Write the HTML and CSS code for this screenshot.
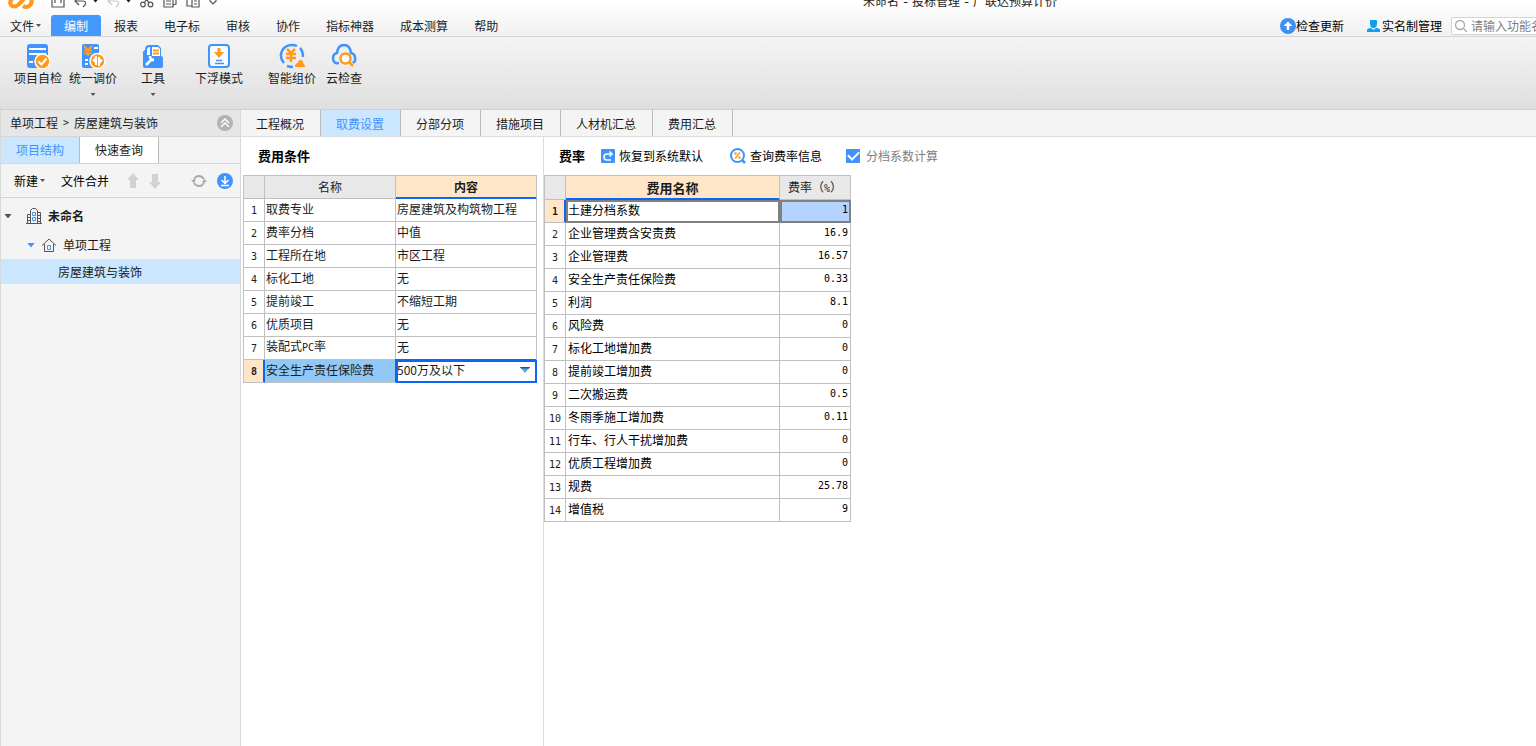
FILE: index.html
```html
<!DOCTYPE html>
<html lang="zh-CN">
<head>
<meta charset="utf-8">
<title>未命名 - 投标管理 - 广联达预算计价</title>
<link rel="stylesheet" href="styles.css">
</head>
<body>
<div class="app">
  <header class="top">
    <div class="titlebar">
      <svg class="logo" width="26" height="18" viewBox="0 0 26 18" fill="none" stroke="#ff9a1c" stroke-width="4"><path d="M10 2 4 7Q1 10 3 13q3 3 7 0l5-5q3-4 6-5M15 14q3 2 6 0 4-3 2-7"/></svg>
      <div class="quick">
        <button aria-label="保存"><svg width="14" height="14" viewBox="0 0 14 14"><path d="M1 1h12v12H1zM4 1v8M10 1v8"/></svg></button>
        <button aria-label="撤销"><svg width="14" height="14" viewBox="0 0 14 14"><path d="M5 3 1 7l4 4M1 7h7q5 0 3 4l-2 2"/></svg></button>
        <i class="caret dark"></i>
        <button aria-label="恢复" class="faint"><svg width="14" height="14" viewBox="0 0 14 14"><path d="M5 3 1 7l4 4M1 7h7q5 0 3 4l-2 2"/></svg></button>
        <i class="caret dark"></i>
        <button aria-label="剪切"><svg width="14" height="14" viewBox="0 0 14 14"><circle cx="3" cy="10.500" r="2.300"/><circle cx="10.500" cy="10.500" r="2.300"/><path d="M4 9l6-8M9 9 4 1"/></svg></button>
        <button aria-label="复制"><svg width="14" height="14" viewBox="0 0 14 14"><path d="M1 3h9v10H1zM4 3V1h9v9l-3 1M3 7h5M3 10h5"/></svg></button>
        <button aria-label="粘贴"><svg width="14" height="14" viewBox="0 0 14 14"><path d="M6 12H1V1h10v3M6 4h7v9H6zM8 7h3M8 10h3"/></svg></button>
        <button aria-label="更多" class="more"><svg width="8" height="8" viewBox="0 0 8 8"><path d="M1 2h6v2L4 7 1 4z"/></svg></button>
      </div>
      <h1 class="title">未命名<span> - </span>投标管理<span> - </span>广联达预算计价</h1>
    </div>
    <nav class="menu">
      <button class="file">文件<i class="caret"></i></button>
      <button class="active">编制</button>
      <button>报表</button>
      <button>电子标</button>
      <button>审核</button>
      <button>协作</button>
      <button>指标神器</button>
      <button>成本测算</button>
      <button>帮助</button>
      <div class="tools">
        <a href="#" class="update"><svg width="16" height="16" viewBox="0 0 16 16"><circle cx="8" cy="8" r="8" fill="#3f8ef7"/><path d="M8 12V6" stroke="#fff" stroke-width="2.500"/><path d="M3.500 8 8 3.500 12.500 8z" fill="#fff"/></svg>检查更新</a>
        <a href="#" class="user"><svg width="13" height="12" viewBox="0 0 13 12" fill="#0aa2ee"><path d="M3 1q0-1 1-1h5q1 0 1 1v3q0 3-2.500 4h-2Q3 7 3 4zM0 12v-2q0-1.500 4-2l2.500 2L9 8q4 .5 4 2v2z"/></svg>实名制管理</a>
        <label class="search"><svg width="14" height="14" viewBox="0 0 14 14" fill="none" stroke="#aaa" stroke-width="1.300"><circle cx="6" cy="6" r="4.500"/><path d="m9 9 4 4"/></svg><input type="text" aria-label="搜索功能" placeholder="请输入功能名称"></label>
      </div>
    </nav>
  </header>

  <div class="ribbon">
    <div class="group">
      <button><svg width="24" height="26" viewBox="0 0 24 26"><rect x="1" y="1" width="21" height="24" rx="3" fill="#4094fb"/><path d="M3 6h17M3 11h17M3 19h4" stroke="#fff" stroke-width="2"/><circle cx="16.500" cy="18.500" r="7.500" fill="#ff9a1c" stroke="#fff" stroke-width="1.500"/><path d="m12.500 18.500 3 3 5-6" fill="none" stroke="#fff" stroke-width="2"/></svg>项目自检</button>
      <button><svg width="26" height="26" viewBox="0 0 26 26"><rect x="2" y="1" width="17" height="24" rx="2" fill="#4094fb"/><path d="m4 3 4 4 4-4M8 7v6M4 7.500h8M4 10.500h8" fill="none" stroke="#ff9a1c" stroke-width="2"/><path d="M14 5h4M5 17h3M5 21h3" stroke="#fff" stroke-width="2"/><circle cx="17.500" cy="18" r="7.500" fill="#ff9a1c" stroke="#fff" stroke-width="1.500"/><path d="M16 13v9M13.500 18H16M19 23v-9M19 17h2.500" fill="none" stroke="#fff" stroke-width="2"/><path d="M12 18l4-5v5zM23 17l-4 5v-5z" fill="#fff"/></svg>统一调价<i class="caret"></i></button>
    </div>
    <div class="group tool">
      <button><svg width="24" height="26" viewBox="0 0 24 26"><path d="M2 9q0-1 2-2 0-5 4-5h9l3 3v8q2 0 2 2v8q0 2-2 2H4q-2 0-2-2z" fill="#4094fb"/><path d="M6 7q0-3 3-3v8H6zM11 4h6l2 2v7h-8z" fill="#fff"/><path d="M12 7.500h6M12 10.500h6" stroke="#ff9a1c" stroke-width="2"/><path d="m5 22 6-6M9 13q0 4 4 4" fill="none" stroke="#fff" stroke-width="2.500"/></svg>工具<i class="caret"></i></button>
    </div>
    <div class="group float">
      <button><svg width="24" height="26" viewBox="0 0 24 26"><rect x="2" y="2" width="20" height="22" rx="3" fill="#f8fbff" stroke="#4094fb" stroke-width="2"/><path d="M10.500 5h3v4H17l-5 6-5-6h3.500z" fill="#ff9a1c"/><path d="M9 17.500h6M8 20.500h9" stroke="#4094fb" stroke-width="1.500"/></svg>下浮模式</button>
    </div>
    <div class="group smart">
      <button><svg width="26" height="26" viewBox="0 0 26 26" fill="none"><path d="M5 20Q0 14 3 8q3-6 10-6 3 0 5 1M21 5q3 3 3 9M8 23q3 1 6 1" stroke="#4094fb" stroke-width="2.500"/><path d="m8 6 4 4 4-4M12 9v10M7 11h10M7 15h10" stroke="#ff9a1c" stroke-width="2.500"/><path d="M16 24q0-4 3-4 0-3 3-3 2 0 2 3 2 1 2 4z" fill="#ff9a1c"/></svg>智能组价</button>
      <button><svg width="26" height="26" viewBox="0 0 26 26" fill="none"><path d="M8 20Q2 21 2 15q0-4 4-5 1-8 7-8t7 8q5 1 4 8l-2 2" stroke="#4094fb" stroke-width="2.500"/><circle cx="14.500" cy="15.500" r="5" fill="#fff" stroke="#ff9a1c" stroke-width="2.500"/><path d="m18 19 4 4" stroke="#ff9a1c" stroke-width="2.500"/></svg>云检查</button>
    </div>
  </div>

  <div class="body">
    <aside class="side">
      <div class="crumb"><div class="path"><span>单项工程</span><span class="mono">&gt;</span><span>房屋建筑与装饰</span></div>
        <button aria-label="收起"><svg width="16" height="16" viewBox="0 0 16 16"><circle cx="8" cy="8" r="8" fill="#b2b2b2"/><path d="m4 8 4-4 4 4M4 12l4-4 4 4" fill="none" stroke="#fff" stroke-width="1.500"/></svg></button></div>
      <div class="sidetabs"><button class="active">项目结构</button><button>快速查询</button></div>
      <div class="sidetools">
        <button class="new">新建<i class="caret"></i></button>
        <button class="merge">文件合并</button>
        <button class="up" aria-label="上移"><svg width="12" height="16" viewBox="0 0 12 16" fill="#d2d2d2"><path d="M6 0 0 7h3v8h6V7h3z"/></svg></button>
        <button class="down" aria-label="下移"><svg width="12" height="16" viewBox="0 0 12 16" fill="#d2d2d2"><path d="M6 16 0 9h3V1h6v8h3z"/></svg></button>
        <button class="refresh" aria-label="刷新"><svg width="16" height="14" viewBox="0 0 16 14" fill="none" stroke="#aaa" stroke-width="1.800"><path d="M3 6q1-4 5-4 3 0 5 3M13 8q-1 4-5 4-3 0-5-3"/><path d="M0 6h5L2.500 9zM11 8h5l-2.500-3z" fill="#aaa" stroke="none"/></svg></button>
        <button aria-label="下载"><svg width="16" height="16" viewBox="0 0 16 16"><circle cx="8" cy="8" r="8" fill="#3f94fb"/><path d="M8 3v7M4.500 7 8 10.500 11.500 7M4 12.500h8" fill="none" stroke="#fff" stroke-width="1.500"/></svg></button>
      </div>
      <ul class="tree">
        <li class="root"><i class="caret big"></i><svg width="16" height="16" viewBox="0 0 16 16" fill="none" stroke="#555"><path d="M0 15.500h16M1.500 15V6.500H4M4.500 15V2.500l2-2h3l2 2V15M12 4.500h2.500V15M1.500 9.500H4M1.500 12.500H4M12 7.500h2M12 10.500h2M12 13.500h2"/><path d="M6.500 4.500h3v3h-3zM6.500 9.500h3v3h-3z" stroke="#3f94fb"/></svg><b>未命名</b></li>
        <li class="unit"><i class="caret big blue"></i><svg width="14" height="14" viewBox="0 0 14 14" fill="none" stroke="#555"><path d="M0 7.500 7 1l7 6.500M2.500 6v7.500h9V6"/><path d="M5.500 7.500h3v4h-3z" stroke="#3f94fb"/></svg>单项工程</li>
        <li class="selected">房屋建筑与装饰</li>
      </ul>
    </aside>

    <main class="main">
      <nav class="tabs">
        <button>工程概况</button><button class="active">取费设置</button><button>分部分项</button><button>措施项目</button><button>人材机汇总</button><button>费用汇总</button>
      </nav>
      <div class="panels">
        <section class="panel conditions">
          <div class="bar"><h2>费用条件</h2></div>
          <table class="grid">
            <colgroup><col class="c-no"><col class="c-name"><col class="c-content"></colgroup>
            <thead><tr><th></th><th>名称</th><th class="current">内容</th></tr></thead>
            <tbody>
              <tr><th>1</th><td>取费专业</td><td>房屋建筑及构筑物工程</td></tr>
              <tr><th>2</th><td>费率分档</td><td>中值</td></tr>
              <tr><th>3</th><td>工程所在地</td><td>市区工程</td></tr>
              <tr><th>4</th><td>标化工地</td><td>无</td></tr>
              <tr><th>5</th><td>提前竣工</td><td>不缩短工期</td></tr>
              <tr><th>6</th><td>优质项目</td><td>无</td></tr>
              <tr><th>7</th><td>装配式<span class="mono">PC</span>率</td><td>无</td></tr>
              <tr class="picked"><th>8</th><td>安全生产责任保险费</td><td class="editing"><div class="combo"><select aria-label="安全生产责任保险费"><option>500万及以下</option></select><svg width="10" height="6" viewBox="0 0 10 6"><path d="M0 0h10L5 6z" fill="#5aa5dc"/><path d="M0 0h10L9 1.500H1z" fill="#1c5a86"/></svg></div></td></tr>
            </tbody>
          </table>
        </section>
        <section class="panel rates">
          <div class="bar">
            <h2>费率</h2>
            <button class="reset"><svg width="14" height="14" viewBox="0 0 14 14"><rect width="14" height="14" rx="1" fill="#3f94fb"/><path d="M10 11H6Q3 11 3 8t3-3h5M8.500 2.500 11 5 8.500 7.500" fill="none" stroke="#fff" stroke-width="1.500"/></svg>恢复到系统默认</button>
            <button class="query"><svg width="16" height="16" viewBox="0 0 16 16" fill="none"><circle cx="7.500" cy="7.500" r="6.500" stroke="#3f94fb" stroke-width="2"/><path d="m12 12 3 3" stroke="#3f94fb" stroke-width="2.500"/><path d="m5 10.500 5-6" stroke="#ff9a1c" stroke-width="1.500"/><circle cx="5.500" cy="5.500" r="1.300" fill="#ff9a1c"/><circle cx="9.500" cy="9.500" r="1.300" fill="#ff9a1c"/></svg>查询费率信息</button>
            <label class="check"><input type="checkbox" checked>分档系数计算</label>
          </div>
          <table class="grid">
            <colgroup><col class="c-no"><col class="c-fee"><col class="c-rate"></colgroup>
            <thead><tr><th></th><th class="current">费用名称</th><th>费率（<span class="mono">%</span>）</th></tr></thead>
            <tbody>
              <tr class="focus"><th>1</th><td>土建分档系数</td><td>1</td></tr>
              <tr><th>2</th><td>企业管理费含安责费</td><td>16.9</td></tr>
              <tr><th>3</th><td>企业管理费</td><td>16.57</td></tr>
              <tr><th>4</th><td>安全生产责任保险费</td><td>0.33</td></tr>
              <tr><th>5</th><td>利润</td><td>8.1</td></tr>
              <tr><th>6</th><td>风险费</td><td>0</td></tr>
              <tr><th>7</th><td>标化工地增加费</td><td>0</td></tr>
              <tr><th>8</th><td>提前竣工增加费</td><td>0</td></tr>
              <tr><th>9</th><td>二次搬运费</td><td>0.5</td></tr>
              <tr><th>10</th><td>冬雨季施工增加费</td><td>0.11</td></tr>
              <tr><th>11</th><td>行车、行人干扰增加费</td><td>0</td></tr>
              <tr><th>12</th><td>优质工程增加费</td><td>0</td></tr>
              <tr><th>13</th><td>规费</td><td>25.78</td></tr>
              <tr><th>14</th><td>增值税</td><td>9</td></tr>
            </tbody>
          </table>
        </section>
      </div>
    </main>
  </div>
</div>
</body>
</html>
```

FILE: styles.css
```css
* { box-sizing: border-box; }
body {
  margin: 0;
  overflow: hidden;
  font: 12px/16px "Noto Sans CJK SC", sans-serif;
  color: #1c1c1c;
  background: #fff;
}
button {
  border: 0;
  padding: 0;
  background: none;
  font: inherit;
  color: inherit;
  white-space: nowrap;
}
svg { display: block; flex: none; }
h1, h2, ul { margin: 0; padding: 0; }
a { color: inherit; text-decoration: none; }

.app { display: flex; flex-direction: column; height: 100vh; overflow: hidden; }

.caret {
  width: 5px;
  height: 3px;
  flex: none;
  background: #555;
  clip-path: polygon(0 0, 100% 0, 50% 100%);
}
.caret.dark { background: #111; }
.caret.big { width: 8px; height: 5px; }
.caret.blue { background: #3f94fb; }

/* Title bar and menu */
.top { margin-top: -11px; background: linear-gradient(#fff, #fff 11px, #f1f1f1); border-bottom: 1px solid #d5d5d5; }
.titlebar { display: grid; grid-template-columns: 42px 821px 1fr; align-items: center; height: 24px; }
.logo { margin-left: 8px; }
.quick { display: flex; align-items: center; gap: 9px; padding-left: 9px; }
.quick svg { fill: none; stroke: #555; stroke-width: 1.2px; }
.quick .caret { margin-left: -4px; }
.quick .faint { opacity: .3; }
.title { font-size: 12px; font-weight: 400; white-space: nowrap; }
.title span { font: 13px/16px "DejaVu Sans", sans-serif; }

.menu { display: flex; align-items: center; height: 23px; padding-top: 2px; }
.menu > button { height: 21px; padding: 0 13px; }
.menu > .file { display: flex; align-items: center; gap: 2px; padding: 0 10px; }
.menu > .active { background: #4298fd; color: #fff; border-radius: 3px 3px 0 0; }
.tools { display: flex; align-items: center; margin-left: auto; color: #000; white-space: nowrap; }
.tools a { display: flex; align-items: center; }
.user { gap: 2px; margin: 0 9px 0 23px; }
.search {
  display: flex;
  align-items: center;
  gap: 3px;
  width: 85px;
  height: 18px;
  padding-left: 2px;
  border: 1px solid #d4d4d4;
  border-right: 0;
  border-radius: 2px 0 0 2px;
  background: #fff;
}
.search input { flex: 1; min-width: 0; border: 0; padding: 0; outline: 0; background: none; font: inherit; }
.search input::placeholder { color: #808080; }

/* Ribbon */
.ribbon {
  display: flex;
  gap: 16px;
  height: 73px;
  padding: 6px 11px 0;
  background: linear-gradient(#f4f4f4, #dfdfdf);
  border-bottom: 1px solid #cfcfcf;
}
.group { display: flex; align-items: flex-start; gap: 1px; }
.group button { display: flex; flex-direction: column; align-items: center; gap: 1px; padding: 0 3px; }
.group .caret { margin-top: 6px; }
.tool button { padding: 0 5px; }
.float button { padding: 0 9px; }
.smart { gap: 10px; }
.smart button { padding: 0; }

/* Sidebar */
.body { flex: 1; display: flex; min-height: 0; }
.side { width: 241px; flex: none; background: #f4f4f4; border: solid #d8d8d8; border-width: 0 1px; }
.crumb { display: flex; align-items: center; justify-content: space-between; height: 27px; padding: 0 7px 0 9px; background: #e6e6e6; border-bottom: 1px solid #d5d5d5; }
.path { display: flex; gap: 5px; }
.sidetabs { display: flex; height: 27px; border-bottom: 1px solid #d5d5d5; }
.sidetabs button { padding: 0 15px; border-right: 1px solid #bbb; background: #fff; }
.sidetabs button.active { background: #cbe7ff; color: #3f94fb; }
.sidetools { display: flex; align-items: center; height: 34px; padding: 0 7px 0 13px; border-bottom: 1px solid #d5d5d5; color: #000; }
.new { display: flex; align-items: center; gap: 2px; }
.merge { margin: 0 18px 0 16px; }
.down { margin-left: 10px; }
.refresh { margin: 0 10px 0 auto; }
.tree { list-style: none; padding-top: 3px; }
.tree li { display: flex; align-items: center; height: 28px; }
.tree .root { gap: 6px; height: 30px; padding-left: 3px; }
.root svg { margin-left: 8px; }
.tree .unit { gap: 7px; padding-left: 26px; }
.tree .selected { height: 25px; padding-left: 57px; background: #cbe7ff; }

/* Main area */
.main { flex: 1; min-width: 0; display: flex; flex-direction: column; }
.tabs { display: flex; height: 27px; background: #f4f4f4; border-bottom: 1px solid #dcdcdc; }
.tabs button { padding: 1px 16px 0 15px; border-right: 1px solid #bbb; }
.tabs button.active { background: #cbe7ff; color: #3f94fb; }
.panels { flex: 1; display: flex; }
.conditions { width: 303px; padding-left: 2px; border-right: 1px solid #dcdcdc; }
.rates { flex: 1; }
.bar { display: flex; align-items: center; height: 38px; padding-left: 15px; color: #000; }
.bar h2 { font-size: 13px; line-height: 18px; }
.bar button { display: flex; align-items: center; }
.reset { gap: 4px; margin-left: 16px; }
.query { gap: 4px; margin-left: 27px; }
.check { display: flex; align-items: center; gap: 6px; margin-left: 24px; color: #808080; }
.check input { appearance: none; display: grid; place-items: center; width: 14px; height: 14px; margin: 0; border-radius: 1px; background: #3f94fb; }
.check input::before {
  content: "";
  width: 9px;
  height: 5px;
  margin-bottom: 3px;
  border: solid #fff;
  border-width: 0 0 2px 2px;
  transform: rotate(-45deg);
}

.mono, .grid tbody th, .rates tbody td:last-child { font: 10px/16px "DejaVu Sans Mono", monospace; }
.grid { table-layout: fixed; width: 294px; border-spacing: 0; border: solid #c0c0c0; border-width: 1px 0 0 1px; }
.rates .grid { width: 307px; }
.c-no { width: 21px; }
.c-name { width: 131px; }
.c-fee { width: 214px; }
.grid td, .grid th { height: 23px; padding: 0 2px; border: solid #c0c0c0; border-width: 0 1px 1px 0; font-weight: 400; white-space: nowrap; overflow: hidden; }
.grid td { padding: 0 2px 2px 1px; }
.grid thead th { background: #e8e8e8; }
.rates thead th { height: 24px; }
.grid thead .current { background: #ffe6c8; font-weight: 700; border-bottom-color: #0a66f5; box-shadow: inset 0 -1px #0a66f5; }
.rates thead .current { font-size: 13px; }
.grid tbody th { padding: 1px 0 0; }
.rates tbody td { padding-left: 2px; color: #000; }
.rates tbody td:last-child { text-align: right; }
.grid .picked th, .grid .focus th { background: #ffe6c8; font-weight: 700; border-right-color: #0a66f5; box-shadow: inset -1px 0 #0a66f5; }
.picked td { background: #91c8f6; }
.picked .editing { padding: 0 0 2px; background: #fff; outline: 2px solid #0a66f5; outline-offset: -2px; box-shadow: -1px -1px #0a66f5; }
.combo { display: grid; grid-template-columns: 1fr 16px; align-items: center; padding-left: 1px; }
.combo select { grid-area: 1 / 1 / 2 / 3; appearance: none; border: 0; padding: 0; outline: 0; background: none; font: inherit; color: inherit; }
.combo svg { grid-area: 1 / 2; pointer-events: none; }
.focus td { outline: 2px solid #808080; outline-offset: -2px; }
.focus td:last-child { background: #b4d4ff; }
```
